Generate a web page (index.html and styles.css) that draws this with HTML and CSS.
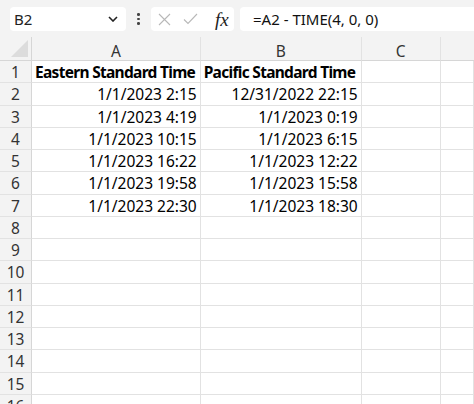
FILE: index.html
```html
<!DOCTYPE html>
<html>
<head>
<meta charset="utf-8">
<link rel="stylesheet" href="styles.css">
</head>
<body>
<div class="app">
  <div class="toolbar">
    <div class="namebox">
      <span class="cellref">B2</span>
      <svg class="chev" width="10" height="6" viewBox="0 0 10 6"><path d="M1 1 L5 5 L9 1" fill="none" stroke="#222" stroke-width="1.6"/></svg>
    </div>
    <div class="dots"><span></span><span></span><span></span></div>
    <div class="fxbox">
      <svg class="ico" width="13" height="13" viewBox="0 0 13 13"><path d="M1 1 L12 12 M12 1 L1 12" stroke="#b8b8b8" stroke-width="1.1" fill="none"/></svg>
      <svg class="ico" width="15" height="12" viewBox="0 0 15 12"><path d="M1 6.5 L5 10.5 L14 1" stroke="#b8b8b8" stroke-width="1.1" fill="none"/></svg>
      <span class="fx">fx</span>
    </div>
    <div class="formula">=A2 - TIME(4, 0, 0)</div>
  </div>
  <div class="sheet">
    <div class="corner"><div class="tri"></div></div>
    <div class="colhead">A</div>
    <div class="colhead">B</div>
    <div class="colhead">C</div>
    <div class="colhead last"></div>

    <div class="rowhead">1</div><div class="cell bold">Eastern Standard Time</div><div class="cell bold">Pacific Standard Time</div><div class="cell"></div><div class="cell"></div>
    <div class="rowhead">2</div><div class="cell num">1/1/2023 2:15</div><div class="cell num">12/31/2022 22:15</div><div class="cell"></div><div class="cell"></div>
    <div class="rowhead">3</div><div class="cell num">1/1/2023 4:19</div><div class="cell num">1/1/2023 0:19</div><div class="cell"></div><div class="cell"></div>
    <div class="rowhead">4</div><div class="cell num">1/1/2023 10:15</div><div class="cell num">1/1/2023 6:15</div><div class="cell"></div><div class="cell"></div>
    <div class="rowhead">5</div><div class="cell num">1/1/2023 16:22</div><div class="cell num">1/1/2023 12:22</div><div class="cell"></div><div class="cell"></div>
    <div class="rowhead">6</div><div class="cell num">1/1/2023 19:58</div><div class="cell num">1/1/2023 15:58</div><div class="cell"></div><div class="cell"></div>
    <div class="rowhead">7</div><div class="cell num">1/1/2023 22:30</div><div class="cell num">1/1/2023 18:30</div><div class="cell"></div><div class="cell"></div>
    <div class="rowhead">8</div><div class="cell"></div><div class="cell"></div><div class="cell"></div><div class="cell"></div>
    <div class="rowhead">9</div><div class="cell"></div><div class="cell"></div><div class="cell"></div><div class="cell"></div>
    <div class="rowhead">10</div><div class="cell"></div><div class="cell"></div><div class="cell"></div><div class="cell"></div>
    <div class="rowhead">11</div><div class="cell"></div><div class="cell"></div><div class="cell"></div><div class="cell"></div>
    <div class="rowhead">12</div><div class="cell"></div><div class="cell"></div><div class="cell"></div><div class="cell"></div>
    <div class="rowhead">13</div><div class="cell"></div><div class="cell"></div><div class="cell"></div><div class="cell"></div>
    <div class="rowhead">14</div><div class="cell"></div><div class="cell"></div><div class="cell"></div><div class="cell"></div>
    <div class="rowhead">15</div><div class="cell"></div><div class="cell"></div><div class="cell"></div><div class="cell"></div>
    <div class="rowhead">16</div><div class="cell"></div><div class="cell"></div><div class="cell"></div><div class="cell"></div>
  </div>
</div>
</body>
</html>
```
FILE: styles.css
```css
* { box-sizing: border-box; }
html, body { margin: 0; padding: 0; }
body {
  width: 474px;
  height: 404px;
  overflow: hidden;
  background: #ffffff;
  font-family: "Noto Sans", "Open Sans", sans-serif;
  color: #000;
}
.app { width: 474px; height: 404px; overflow: hidden; }
.toolbar {
  height: 37px;
  background: #f3f3f3;
  display: flex;
  align-items: flex-start;
  padding-top: 7px;
}
.namebox {
  margin-left: 10px;
  width: 116px;
  height: 24px;
  background: #fff;
  border-radius: 4px;
  display: flex;
  align-items: center;
  justify-content: space-between;
  padding: 0 8px 0 4px;
  font-size: 15px;
}
.cellref { color: #222; }
.dots {
  width: 25px;
  height: 24px;
  display: flex;
  flex-direction: column;
  align-items: center;
  justify-content: center;
  gap: 2px;
}
.dots span { width: 2.5px; height: 2.5px; background: #444; border-radius: 50%; }
.fxbox {
  width: 83px;
  height: 24px;
  background: #fff;
  border-radius: 4px;
  display: flex;
  align-items: center;
  padding-left: 7px;
  gap: 12px;
}
.fx {
  font-family: "Liberation Serif", "DejaVu Serif", serif;
  font-style: italic;
  font-size: 19px;
  color: #222;
  margin-left: 5px;
  line-height: 1;
}
.formula {
  margin-left: 6px;
  flex: 1;
  height: 24px;
  background: #fff;
  border-radius: 4px 0 0 4px;
  font-size: 15px;
  line-height: 24px;
  padding-left: 13px;
  color: #111;
}
.sheet {
  display: grid;
  grid-template-columns: 32px 168.7px 161px 79px 1fr;
  grid-template-rows: 24px repeat(16, 22.26px);
}
.corner {
  background: #f3f3f3;
  border-right: 1px solid #d6d6d6;
  border-bottom: 1px solid #d6d6d6;
  position: relative;
}
.tri {
  position: absolute;
  right: 3px;
  bottom: 3px;
  width: 0;
  height: 0;
  border-left: 17px solid transparent;
  border-bottom: 17px solid #dcdcdc;
}
.colhead {
  background: #f3f3f3;
  border-right: 1px solid #e2e2e2;
  border-bottom: 1px solid #d6d6d6;
  text-align: center;
  font-size: 15.5px;
  line-height: 23px;
  padding-top: 3px;
  color: #333;
}
.colhead.last { border-right: none; }
.rowhead {
  background: #f3f3f3;
  border-right: 1px solid #d6d6d6;
  border-bottom: 1px solid #e2e2e2;
  text-align: center;
  font-size: 15.5px;
  line-height: 22px;
  color: #333;
}
.cell {
  border-right: 1px solid #e2e2e2;
  border-bottom: 1px solid #e2e2e2;
  font-size: 15.5px;
  line-height: 22px;
  padding: 0 3px;
  white-space: nowrap;
  overflow: hidden;
}
.cell.bold { font-weight: bold; letter-spacing: -0.7px; }
.cell.num { text-align: right; }
```
